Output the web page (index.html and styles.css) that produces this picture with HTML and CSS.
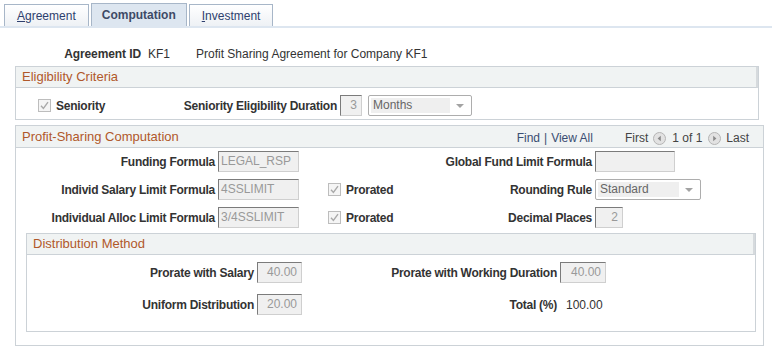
FILE: index.html
```html
<!DOCTYPE html>
<html>
<head>
<meta name="viewport" content="width=device-width, initial-scale=1">
<link rel="stylesheet" href="styles.css">
</head>
<body>

<div class="tabs">
  <a class="tab"><u>A</u>greement</a>
  <a class="tab active">Computation</a>
  <a class="tab"><u>I</u>nvestment</a>
</div>

<div class="keyrow">
  <span class="key-label">Agreement ID</span>
  <span class="key-value">KF1</span>
  <span>Profit Sharing Agreement for Company KF1</span>
</div>

<div class="box elig">
  <div class="box-head">Eligibility Criteria</div>
  <div class="elig-body">
    <span class="check-group">
      <span class="check"><svg width="13" height="13" viewBox="0 0 13 13"><path d="M3 6.8 L5.4 9.4 L10 3.2" fill="none" stroke="#a9a9a9" stroke-width="1.4"/></svg></span>
      <b>Seniority</b>
    </span>
    <span class="elig-label">Seniority Eligibility Duration</span>
    <span class="field num w-duration">3</span>
    <span class="select w-months"><span class="select-value">Months</span><span class="select-arrow"></span></span>
  </div>
</div>

<div class="box profit">
  <div class="box-head split">
    <span>Profit-Sharing Computation</span>
    <span class="nav">
      <span class="nav-link">Find</span> | <span class="nav-link">View All</span>
      <span class="nav-pages">
        First
        <svg class="nav-icon" width="13" height="13" viewBox="0 0 13 13"><circle cx="6.5" cy="6.5" r="6" fill="#e2e2e2" stroke="#b4b4b4"/><path d="M7.8 3.8 L4.6 6.5 L7.8 9.2 Z" fill="#8a8a8a"/></svg>
        <span>1 of 1</span>
        <svg class="nav-icon" width="13" height="13" viewBox="0 0 13 13"><circle cx="6.5" cy="6.5" r="6" fill="#e2e2e2" stroke="#b4b4b4"/><path d="M5.2 3.8 L8.4 6.5 L5.2 9.2 Z" fill="#8a8a8a"/></svg>
        Last
      </span>
    </span>
  </div>
  <div class="profit-body">
    <span class="label">Funding Formula</span>
    <span><span class="field w-formula">LEGAL_RSP</span></span>
    <span></span>
    <span class="label">Global Fund Limit Formula</span>
    <span><span class="field w-global"></span></span>

    <span class="label">Individ Salary Limit Formula</span>
    <span><span class="field w-formula">4SSLIMIT</span></span>
    <span class="check-group">
      <span class="check"><svg width="13" height="13" viewBox="0 0 13 13"><path d="M3 6.8 L5.4 9.4 L10 3.2" fill="none" stroke="#a9a9a9" stroke-width="1.4"/></svg></span>
      <b>Prorated</b>
    </span>
    <span class="label">Rounding Rule</span>
    <span><span class="select w-rounding"><span class="select-value">Standard</span><span class="select-arrow"></span></span></span>

    <span class="label">Individual Alloc Limit Formula</span>
    <span><span class="field w-formula">3/4SSLIMIT</span></span>
    <span class="check-group">
      <span class="check"><svg width="13" height="13" viewBox="0 0 13 13"><path d="M3 6.8 L5.4 9.4 L10 3.2" fill="none" stroke="#a9a9a9" stroke-width="1.4"/></svg></span>
      <b>Prorated</b>
    </span>
    <span class="label">Decimal Places</span>
    <span><span class="field num w-decimal">2</span></span>
  </div>

  <div class="box dist">
    <div class="box-head">Distribution Method</div>
    <div class="dist-body">
      <span class="label">Prorate with Salary</span>
      <span><span class="field num w-pct">40.00</span></span>
      <span class="label">Prorate with Working Duration</span>
      <span><span class="field num w-pct2">40.00</span></span>

      <span class="label">Uniform Distribution</span>
      <span><span class="field num w-pct">20.00</span></span>
      <span class="label">Total (%)</span>
      <span class="total">100.00</span>
    </div>
  </div>
</div>

</body>
</html>
```

FILE: styles.css
```css
body {
  margin: 0;
  font-family: "Liberation Sans", Arial, sans-serif;
  font-size: 12px;
  color: #333;
  background-color: #fff;
}

b {
  letter-spacing: -0.25px;
}

/* tabs */
.tabs {
  display: flex;
  align-items: flex-end;
  gap: 2px;
  height: 22px;
  padding: 4px 0 0 4px;
  border-bottom: 2px solid #dde6f0;
}

.tab {
  display: flex;
  align-items: center;
  box-sizing: border-box;
  height: 22px;
  padding: 0 12px;
  border: 1px solid #a7b6c8;
  border-bottom: none;
  background: linear-gradient(#ffffff, #eef1f5);
  color: #2e3f6e;
}

.tab.active {
  height: 23px;
  padding: 0 10px;
  background: #dde6f0;
  font-weight: bold;
  color: #3e4a66;
}

/* key row */
.keyrow {
  display: flex;
  align-items: center;
  height: 20px;
  margin-top: 16px;
}

.key-label {
  width: 133px;
  margin-left: 8px;
  text-align: right;
  font-weight: bold;
  letter-spacing: -0.1px;
}

.key-value {
  width: 55px;
  padding-left: 7px;
  box-sizing: border-box;
}

/* group boxes */
.box {
  border: 1px solid #ccd2d7;
  box-sizing: border-box;
}

.box-head {
  height: 20px;
  line-height: 20px;
  padding-left: 6px;
  background: #f0f3f3;
  border-bottom: 1px solid #ccd2d7;
  border-right: 2px solid #d6dadd;
  color: #b0582a;
  font-size: 13px;
}

.box-head.split {
  display: flex;
  justify-content: space-between;
  align-items: center;
  height: 21px;
  line-height: normal;
  border-right: none;
}

.elig {
  width: 744px;
  margin: 2px 0 0 15px;
}

.elig-body {
  display: flex;
  align-items: center;
  height: 31px;
  padding: 7px 0 3px 22px;
  box-sizing: border-box;
}

.elig-body .check-group {
  width: 90px;
}

.elig-label {
  width: 209px;
  text-align: right;
  font-weight: bold;
  letter-spacing: -0.25px;
  margin-right: 3px;
}

.profit {
  width: 749px;
  margin: 5px 0 0 15px;
  padding-bottom: 13px;
}

.nav {
  display: flex;
  align-items: center;
  gap: 4px;
  padding-right: 14px;
  margin-top: 3px;
  font-size: 12px;
  color: #3a4d72;
}

.nav-pages {
  display: flex;
  align-items: center;
  gap: 5px;
  margin-left: 28px;
  color: #444;
}

.nav-pages span {
  padding: 0 1px;
}

.nav-icon {
  display: block;
}

.profit-body {
  display: grid;
  grid-template-columns: 202px 110px 80px 187px auto;
  row-gap: 7px;
  align-items: center;
  padding-top: 3px;
}

.dist {
  margin: 5px 7px 0 10px;
}

.dist-body {
  display: grid;
  grid-template-columns: 230px 60px 243px auto;
  row-gap: 11px;
  align-items: center;
  padding: 7px 0 16px 0;
}

.label {
  text-align: right;
  font-weight: bold;
  letter-spacing: -0.25px;
  padding-right: 3px;
}

.total {
  padding-left: 6px;
}

/* fields */
.field {
  display: block;
  box-sizing: border-box;
  height: 21px;
  line-height: 19px;
  padding: 0 2px;
  background: #f0f0f0;
  border: 1px solid #cfcfcf;
  border-top-color: #7b7b7b;
  border-left-color: #7b7b7b;
  color: #999;
  white-space: nowrap;
  overflow: hidden;
}

.field.num {
  text-align: right;
  padding-right: 4px;
}

.w-formula { width: 81px; }
.w-global { width: 80px; }
.w-decimal { width: 28px; }
.w-duration { width: 22px; }
.w-pct { width: 45px; }
.w-pct2 { width: 46px; }

.select {
  display: flex;
  align-items: center;
  box-sizing: border-box;
  height: 21px;
  padding: 2px;
  background: #fff;
  border: 1px solid #adadad;
  border-radius: 2px;
}

.elig-body .select {
  margin-left: 6px;
}

.w-months { width: 104px; }
.w-rounding { width: 106px; }

.select-value {
  flex: 1;
  height: 15px;
  line-height: 15px;
  padding-left: 2px;
  background: #efefef;
  color: #666;
}

.select-arrow {
  width: 19px;
  height: 0;
  position: relative;
}

.select-arrow::after {
  content: "";
  position: absolute;
  left: 6px;
  top: -2px;
  border-left: 4px solid transparent;
  border-right: 4px solid transparent;
  border-top: 4px solid #a3a3a3;
}

/* checkboxes */
.check-group {
  display: flex;
  align-items: center;
  gap: 5px;
}

.check {
  display: block;
  width: 13px;
  height: 13px;
  box-sizing: border-box;
  border: 1px solid #bdbdbd;
  background: #f5f5f5;
}

.check svg {
  display: block;
  margin: -1px;
}
```
